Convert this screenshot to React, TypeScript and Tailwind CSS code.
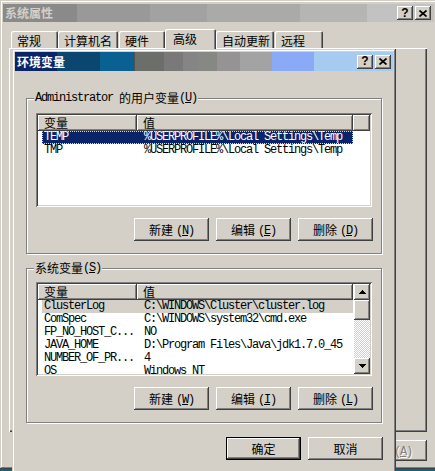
import React from 'react'

const CJK = "font-['Noto_Sans_CJK_SC',sans-serif]"
const MONO = "font-['Liberation_Mono','Noto_Sans_CJK_SC',monospace] text-[12px] tracking-[-1.2px]"
const RAISED =
  'bg-[#d4d0c8] shadow-[inset_-1px_-1px_#404040,inset_1px_1px_#ffffff,inset_-2px_-2px_#808080,inset_2px_2px_#d4d0c8]'
const SUNKEN =
  'shadow-[inset_1px_1px_#808080,inset_-1px_-1px_#ffffff,inset_2px_2px_#404040,inset_-2px_-2px_#d4d0c8]'
const WINDOW =
  'bg-[#d4d0c8] shadow-[inset_-1px_-1px_#404040,inset_1px_1px_#d4d0c8,inset_-2px_-2px_#808080,inset_2px_2px_#ffffff]'

type Row = [string, string]

const userVars: Row[] = [
  ['TEMP', '%USERPROFILE%\\Local Settings\\Temp'],
  ['TMP', '%USERPROFILE%\\Local Settings\\Temp'],
]

const sysVars: Row[] = [
  ['ClusterLog', 'C:\\WINDOWS\\Cluster\\cluster.log'],
  ['ComSpec', 'C:\\WINDOWS\\system32\\cmd.exe'],
  ['FP_NO_HOST_C...', 'NO'],
  ['JAVA_HOME', 'D:\\Program Files\\Java\\jdk1.7.0_45'],
  ['NUMBER_OF_PR...', '4'],
  ['OS', 'Windows NT'],
]

function Key({ k }: { k: string }) {
  return (
    <span className={MONO}>
      (<span className="underline">{k}</span>)
    </span>
  )
}

function CapBtn({ kind }: { kind: 'help' | 'close' }) {
  return (
    <div className={`${RAISED} w-[16px] h-[14px] flex items-center justify-center`}>
      {kind === 'help' ? (
        <span className="font-['Liberation_Sans',sans-serif] font-bold text-[12px] leading-none text-black -mt-px">?</span>
      ) : (
        <svg width="8" height="7" viewBox="0 0 8 7">
          <path d="M0.5 0.5 L7.5 6.5 M7.5 0.5 L0.5 6.5" stroke="#000" strokeWidth="1.7" />
        </svg>
      )}
    </div>
  )
}

function Button({ label, k, def }: { label: string; k?: string; def?: boolean }) {
  return (
    <div className={def ? 'w-[75px] h-[23px] border border-black' : 'w-[75px] h-[23px]'}>
      <div className={`${RAISED} w-full h-full flex items-center justify-center ${CJK} text-[12px] leading-none text-black`}>
        <span>{label}</span>
        {k && (
          <span className="ml-[3px]">
            <Key k={k} />
          </span>
        )}
      </div>
    </div>
  )
}

function HeadCell({ w, children }: { w: string; children?: React.ReactNode }) {
  return (
    <div
      className={`${w} h-full bg-[#d4d0c8] shadow-[inset_-1px_-1px_#404040,inset_1px_1px_#ffffff,inset_-2px_-2px_#808080] pl-[6px] flex items-center ${CJK} text-[12px] leading-none text-black`}
    >
      {children}
    </div>
  )
}

function Tri({ up }: { up?: boolean }) {
  return (
    <svg width="7" height="4" viewBox="0 0 7 4">
      {up ? (
        <path d="M3 0h1v1h1v1h1v1h1v1H0V3h1V2h1V1h1z" fill="#000" />
      ) : (
        <path d="M0 0h7v1H6v1H5v1H4v1H3V3H2V2H1V1H0z" fill="#000" />
      )}
    </svg>
  )
}

function ScrollBar() {
  return (
    <div className="w-[16px] h-full flex flex-col shrink-0">
      <div className={`${RAISED} h-[16px] flex items-center justify-center`}>
        <Tri up />
      </div>
      <div className={`${RAISED} h-[20px]`} />
      <div className="flex-1 bg-[repeating-conic-gradient(#d4d0c8_0_25%,#ffffff_0_50%)] bg-[length:2px_2px]" />
      <div className={`${RAISED} h-[16px] flex items-center justify-center`}>
        <Tri />
      </div>
    </div>
  )
}

function List({ rows, active, scroll }: { rows: Row[]; active?: boolean; scroll?: boolean }) {
  return (
    <div className={`${SUNKEN} bg-white w-[336px] h-[94px] p-[2px]`}>
      <div className="flex h-full overflow-hidden">
        <div className="flex-1 min-w-0">
          <div className="flex h-[16px]">
            <HeadCell w="w-[99px]">变量</HeadCell>
            <HeadCell w="w-[216px]">值</HeadCell>
            {!scroll && <HeadCell w="flex-1" />}
          </div>
          {rows.map(([a, b], i) => {
            const selected = i === 0
            const tone = selected
              ? active
                ? 'bg-[#0a246a] text-white outline-1 outline-dotted outline-[#e8dc8c] -outline-offset-1'
                : 'bg-[#d4d0c8] text-black'
              : 'text-black'
            return (
              <div key={a} className={`ml-[4px] w-[311px] h-[13px] flex items-center leading-[13px] ${MONO} ${tone}`}>
                <span className="w-[102px] pl-[2px] whitespace-pre shrink-0">{a}</span>
                <span className="whitespace-pre">{b}</span>
              </div>
            )
          })}
        </div>
        {scroll && <ScrollBar />}
      </div>
    </div>
  )
}

function Group({ label, children, top }: { label: React.ReactNode; children: React.ReactNode; top: string }) {
  return (
    <div className={`relative border border-[#808080] shadow-[inset_1px_1px_#ffffff,1px_1px_#ffffff] px-[9px] ${top} pb-[12px]`}>
      <div className={`absolute left-[7px] -top-[8px] px-[1px] h-[14px] bg-[#d4d0c8] flex items-center ${CJK} text-[12px] leading-none text-black`}>
        {label}
      </div>
      {children}
    </div>
  )
}

function Tab({ label, w, ml, active }: { label: string; w: string; ml: string; active?: boolean }) {
  return (
    <div
      className={`${w} ${ml} ${
        active ? 'h-[20px] relative z-10 pl-[8px] pt-[3px]' : 'mt-[2px] h-[17px] pl-[6px] pt-[3px]'
      } bg-[#d4d0c8] rounded-t-[2px] shadow-[inset_1px_1px_#ffffff,inset_-1px_0_#404040,inset_-2px_0_#808080] ${CJK} text-[12px] leading-[13px] text-black`}
    >
      {label}
    </div>
  )
}

export default function App() {
  return (
    <div className="relative w-[435px] h-[471px] overflow-hidden bg-[#0e6283]">
      {/* 系统属性 window */}
      <div className={`absolute left-0 top-0 w-[437px] h-[469px] ${WINDOW} pt-[4px] px-[3px]`}>
        <div className="h-[18px] flex items-center bg-[linear-gradient(90deg,#8a8a8a_0_74px,#9a999a_74px_147px,#a2a2a2_147px_204px,#aaaaa9_204px_297px,#b5b6b3_297px_364px,#c2c2c2_364px)]">
          <span className={`pl-[2px] ${CJK} font-bold text-[12px] leading-none text-[#d4d0c8]`}>系统属性</span>
          <div className="ml-auto flex gap-[2px] mr-[3px]">
            <CapBtn kind="help" />
            <CapBtn kind="close" />
          </div>
        </div>
        <div className="mt-[7px] h-[19px] flex items-start pl-[8px]">
          <Tab label="常规" w="w-[47px]" ml="ml-0" />
          <Tab label="计算机名" w="w-[60px]" ml="ml-0" />
          <Tab label="硬件" w="w-[46px]" ml="ml-[1px]" />
          <Tab label="高级" w="w-[51px]" ml="ml-0" active />
          <Tab label="自动更新" w="w-[58px]" ml="ml-0" />
          <Tab label="远程" w="w-[48px]" ml="ml-[1px]" />
        </div>
        <div className="ml-[6px] w-[418px] h-[384px] shadow-[inset_1px_1px_#ffffff,inset_-1px_-1px_#404040,inset_-2px_-2px_#808080]" />
        <div className="w-[424px] mt-[8px] flex justify-end">
          <div className={`${RAISED} w-[75px] h-[21px] flex items-center justify-center ${CJK} text-[12px] leading-none text-[#808080] [text-shadow:1px_1px_#ffffff]`}>
            <span>应用</span>
            <span className="ml-[3px]">
              <Key k="A" />
            </span>
          </div>
        </div>
      </div>

      {/* 环境变量 dialog */}
      <div className={`absolute left-[12px] top-[49px] w-[384px] h-[440px] ${WINDOW} p-[3px]`}>
        <div className="h-[19px] flex items-center bg-[linear-gradient(90deg,#0a246a_0_42px,#0a4670_42px_85px,#0a6090_85px_119px,#505050_119px_120px,#6c6e6a_120px_149px,#7a7879_149px_168px,#858585_168px_183px,#868884_183px_202px,#959394_202px_225px,#a3a3a3_225px_257px,#8aaaf8_257px_299px,#a6caf0_299px)]">
          <span className={`pl-[2px] ${CJK} font-bold text-[12px] leading-none text-white`}>环境变量</span>
          <div className="ml-auto flex gap-[2px] mr-[2px]">
            <CapBtn kind="help" />
            <CapBtn kind="close" />
          </div>
        </div>

        <div className="px-[11px] pt-[27px]">
          <Group
            top="pt-[14px]"
            label={
              <>
                <span className={MONO}>Administrator</span>
                <span className="ml-[6px]">的用户变量</span>
                <Key k="U" />
              </>
            }
          >
            <List rows={userVars} active />
            <div className="mt-[11px] flex justify-end gap-[7px] -mr-[1px]">
              <Button label="新建" k="N" />
              <Button label="编辑" k="E" />
              <Button label="删除" k="D" />
            </div>
          </Group>

          <div className="mt-[14px]">
            <Group
              top="pt-[13px]"
              label={
                <>
                  <span>系统变量</span>
                  <Key k="S" />
                </>
              }
            >
              <List rows={sysVars} scroll />
              <div className="mt-[11px] flex justify-end gap-[7px] -mr-[1px]">
                <Button label="新建" k="W" />
                <Button label="编辑" k="I" />
                <Button label="删除" k="L" />
              </div>
            </Group>
          </div>

          <div className="mt-[14px] flex justify-end gap-[7px] -mr-[1px]">
            <Button label="确定" def />
            <Button label="取消" />
          </div>
        </div>
      </div>
    </div>
  )
}
